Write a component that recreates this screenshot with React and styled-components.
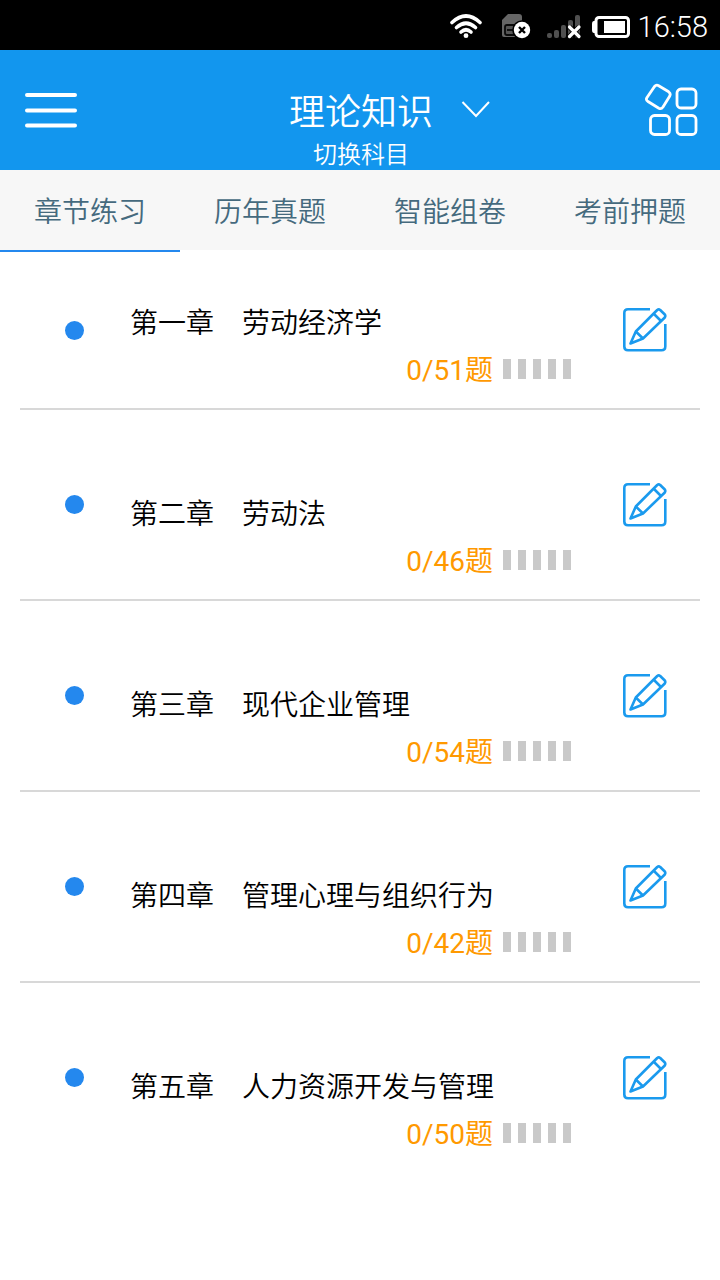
import React, { useState } from 'react';
import styled, { createGlobalStyle } from 'styled-components';

const GlobalStyle = createGlobalStyle`
  * {
    box-sizing: border-box;
  }
  body {
    margin: 0;
    background: #fff;
    font-family: Roboto, "Noto Sans CJK SC", sans-serif;
  }
  button {
    margin: 0;
    padding: 0;
    border: none;
    background: none;
    font: inherit;
    color: inherit;
    cursor: pointer;
  }
  svg {
    display: block;
  }
`;

const StatusBar = styled.div`
  display: flex;
  justify-content: flex-end;
  align-items: center;
  gap: 7px;
  height: 50px;
  padding: 4px 12px 0;
  background: #000;
  color: #fff;
`;

const Clock = styled.time`
  font-size: 29px;
  line-height: 40px;
  font-weight: 300;
`;

const Header = styled.header`
  display: grid;
  grid-template-columns: 1fr auto 1fr;
  align-items: center;
  height: 120px;
  padding: 0 22px 0 24px;
  background: #1296ee;
  color: #fff;
`;

const IconButton = styled.button`
  justify-self: ${({ $end }) => ($end ? 'end' : 'start')};
`;

const Subject = styled.button`
  display: grid;
  grid-template-columns: 1fr auto 1fr;
  align-self: end;
  align-items: center;
  font-weight: 350;
`;

const SubjectName = styled.span`
  grid-column: 2;
  font-size: 36px;
  line-height: 54px;
`;

const Arrow = styled.span`
  padding: 0 0 6px 28px;
`;

const SubjectHint = styled.span`
  grid-column: 1 / -1;
  font-size: 24px;
  line-height: 30px;
`;

const Tabs = styled.nav`
  display: grid;
  grid-template-columns: repeat(4, 1fr);
  background: linear-gradient(#f7f7f7 80px, #fff 80px);
`;

const Tab = styled.button`
  padding-top: 6px;
  border-bottom: 2px solid ${({ $active }) => ($active ? '#2488ee' : 'transparent')};
  color: #456a7e;
  font-size: 28px;
  line-height: 74px;
  font-weight: 350;
`;

const List = styled.ul`
  list-style: none;
  margin: 0;
  padding: 0 20px;
`;

const Row = styled.li`
  display: grid;
  grid-template-columns: 110px 1fr 96px;
  align-items: center;
  height: 191px;
  padding-right: 33px;
  border-bottom: 2px solid #d8d8d8;
  &:first-child {
    height: 158px;
  }
  &:last-child {
    border-color: transparent;
  }
`;

const Dot = styled.span`
  width: 19px;
  height: 19px;
  margin-left: 45px;
  border-radius: 50%;
  background: #2488ee;
`;

const Info = styled.div`
  align-self: end;
  padding-bottom: 15px;
`;

const Title = styled.h2`
  margin: 0;
  font-size: 28px;
  line-height: 42px;
  font-weight: 350;
  color: #000;
`;

const Progress = styled.div`
  display: flex;
  justify-content: flex-end;
  align-items: center;
  gap: 10px;
`;

const Count = styled.span`
  padding-top: 4px;
  font-size: 28px;
  line-height: 44px;
  color: #ff9900;
`;

const Bars = styled.span`
  display: flex;
  gap: 7px;
`;

const Bar = styled.span`
  width: 8px;
  height: 20px;
  background: #c9c9c9;
`;

const EditButton = styled.button`
  justify-self: end;
`;

const tabs = ['章节练习', '历年真题', '智能组卷', '考前押题'];

const chapters = [
  { title: '第一章　劳动经济学', total: 51 },
  { title: '第二章　劳动法', total: 46 },
  { title: '第三章　现代企业管理', total: 54 },
  { title: '第四章　管理心理与组织行为', total: 42 },
  { title: '第五章　人力资源开发与管理', total: 50 },
];

const StatusGlyphs = () => (
  <svg width="182" height="30" viewBox="0 0 182 30" fill="none">
    {/* wifi */}
    <g stroke="#fff" strokeWidth="3.6" strokeLinecap="round">
      <path d="M3 10.500Q17 -2.500 31 10.500" />
      <path d="M7.500 15.500Q17 7 26.500 15.500" />
      <path d="M12 20Q17 15.500 22 20" />
    </g>
    <circle cx="17" cy="23.700" r="2.400" fill="#fff" />
    {/* sim card */}
    <path d="M53 23V8L59 2H70Q73 2 73 5V25H55Q53 25 53 23Z" fill="#666" />
    <rect x="56" y="13" width="13" height="10" rx="2" fill="#555" stroke="#0a0a0a" strokeWidth="1.800" />
    <path d="M58 18H66" stroke="#0a0a0a" strokeWidth="1.800" />
    <circle cx="73" cy="18" r="9.800" fill="#000" />
    <circle cx="73" cy="18" r="8.200" fill="#fff" />
    <path d="M70 15L76 21M76 15L70 21" stroke="#000" strokeWidth="2.400" />
    {/* signal */}
    <g fill="#505050">
      <rect x="98" y="21" width="5" height="5" rx="2" />
      <rect x="105" y="18" width="5" height="8" rx="2" />
      <rect x="112" y="13" width="5" height="13" rx="2" />
      <rect x="119" y="8" width="5" height="18" rx="2" />
      <rect x="126" y="3" width="5" height="23" rx="2" />
    </g>
    <path d="M120.500 15L130 24.500M130 15L120.500 24.500" stroke="#000" strokeWidth="5" />
    <path d="M120.500 15L130 24.500M130 15L120.500 24.500" stroke="#fff" strokeWidth="3.200" strokeLinecap="round" />
    {/* battery */}
    <rect x="147" y="5.500" width="32.500" height="19" rx="3" stroke="#fff" strokeWidth="3" />
    <path d="M147 9H145Q143 9 143 12V18Q143 21 145 21H147Z" fill="#fff" />
    <rect x="155" y="9" width="21" height="12" fill="#fff" />
  </svg>
);

const MenuIcon = () => (
  <svg width="54" height="38" viewBox="0 0 54 38" stroke="#fff" strokeWidth="4" strokeLinecap="round">
    <path d="M3 4H51M3 19.500H51M3 34.500H51" />
  </svg>
);

const ArrowIcon = () => (
  <svg width="29" height="20" viewBox="0 0 29 20" fill="none" stroke="#fff" strokeWidth="2">
    <path d="M1.500 2L15 16L28 2" />
  </svg>
);

const GridIcon = () => (
  <svg width="54" height="54" viewBox="0 0 54 54" fill="none" stroke="#fff" strokeWidth="2.800" strokeLinejoin="round">
    <path d="M10.500 3.500Q12.300 1.300 14.700 2.700L24.700 8.800Q27 10.500 25.800 13L19 24Q17.300 26.500 14.800 25.200L4 18.500Q1.500 17 3 14.500Z" />
    <rect x="33" y="6" width="19" height="19" rx="4" />
    <rect x="6.500" y="32.500" width="19" height="19" rx="4" />
    <rect x="33" y="32.500" width="19" height="19" rx="4" />
  </svg>
);

const EditIcon = () => (
  <svg width="44" height="44" viewBox="0 0 44 44" fill="none" stroke="#1a9aee" strokeWidth="2.600" strokeLinejoin="round">
    <path d="M27 1.300H5Q1.300 1.300 1.300 5V38.500Q1.300 42.300 5 42.300H38.500Q42.300 42.300 42.300 38.500V16" />
    <path d="M7.500 35.500L12.800 23.500L34.200 2Q35.700 .9 37.200 2L41.800 6.500Q42.800 8 41.800 9.500L20 30.500Z" />
    <path d="M12.800 23.500L20 30.500M30.500 5.500L38 13" />
  </svg>
);

const App = () => {
  const [current, setCurrent] = useState(0);

  return (
    <>
      <GlobalStyle />
      <StatusBar>
        <StatusGlyphs />
        <Clock>16:58</Clock>
      </StatusBar>
      <Header>
        <IconButton aria-label="菜单">
          <MenuIcon />
        </IconButton>
        <Subject>
          <SubjectName>理论知识</SubjectName>
          <Arrow>
            <ArrowIcon />
          </Arrow>
          <SubjectHint>切换科目</SubjectHint>
        </Subject>
        <IconButton $end aria-label="更多">
          <GridIcon />
        </IconButton>
      </Header>
      <Tabs>
        {tabs.map((name, index) => (
          <Tab key={name} $active={index === current} onClick={() => setCurrent(index)}>
            {name}
          </Tab>
        ))}
      </Tabs>
      <List>
        {chapters.map(({ title, total }) => (
          <Row key={title}>
            <Dot />
            <Info>
              <Title>{title}</Title>
              <Progress>
                <Count>0/{total}题</Count>
                <Bars>
                  {[1, 2, 3, 4, 5].map((n) => <Bar key={n} />)}
                </Bars>
              </Progress>
            </Info>
            <EditButton aria-label="练习">
              <EditIcon />
            </EditButton>
          </Row>
        ))}
      </List>
    </>
  );
};

export default App;
